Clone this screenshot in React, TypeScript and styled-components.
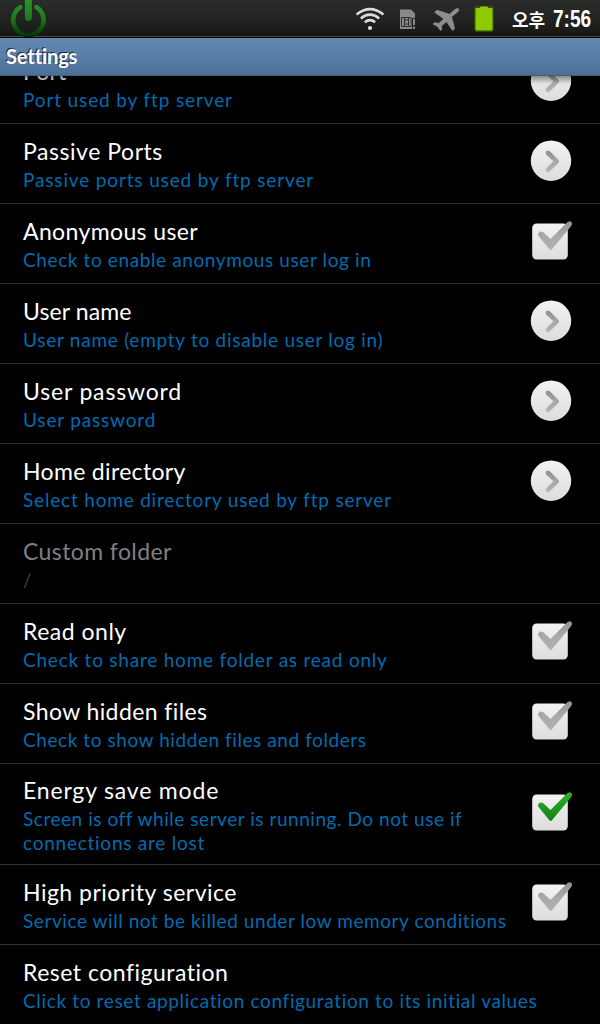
import React from 'react';
import styled, { createGlobalStyle } from 'styled-components';

const GlobalStyle = createGlobalStyle`
  * { box-sizing: border-box; }
  html, body { margin: 0; padding: 0; background: #000; }
`;

const Screen = styled.main`
  width: 600px;
  height: 1024px;
  display: flex;
  flex-direction: column;
  overflow: hidden;
  background: #000;
  color: #fff;
  font-family: Lato, "Open Sans", sans-serif;
  font-variant-ligatures: none;
`;

const StatusBar = styled.header`
  flex: none;
  height: 38px;
  display: flex;
  justify-content: space-between;
  background: linear-gradient(#2b2d2b 0, #1f211f 24px, #151715 36px);
  border-bottom: 1px solid #000;
  box-shadow: inset 0 -1px 0 #454545;
`;

const StatusIcons = styled.div`
  display: flex;
  align-items: flex-start;
`;

const Clock = styled.time`
  width: 88px;
  margin-left: 5px;
  display: flex;
  align-items: center;
  height: 38px;
  white-space: nowrap;
`;

const Meridiem = styled.span`
  font: 700 18px/38px "Noto Sans CJK KR", sans-serif;
`;

const Digits = styled.span`
  margin-left: 8px;
  font: 700 23px/38px "Liberation Sans", Arial, sans-serif;
  transform: scaleX(0.83);
  transform-origin: left center;
`;

const TitleBar = styled.h1`
  flex: none;
  height: 38px;
  margin: 0;
  padding-left: 6px;
  background: linear-gradient(#6387b1, #5a82ab 40%, #4c6f96);
  border-bottom: 1px solid #3c5f7c;
  font-size: 20px;
  line-height: 37px;
  font-weight: 700;
  letter-spacing: -0.1px;
  text-shadow: -1px -1px 0 #1b2838;
`;

const Viewport = styled.section`
  flex: 1;
  min-height: 0;
  overflow: hidden;
  position: relative;
  &::before {
    content: '';
    position: absolute;
    z-index: 1;
    inset: 0 0 auto;
    height: 8px;
    background: linear-gradient(rgba(0, 0, 0, 0.4), transparent);
  }
`;

const List = styled.ul`
  list-style: none;
  margin: -32px 0 0;
  padding: 0;
`;

const Row = styled.li<{ $tall?: boolean }>`
  height: ${(p) => (p.$tall ? 101 : 80)}px;
  padding: ${(p) => (p.$tall ? 12 : 13)}px 0 0 23px;
  display: flex;
  justify-content: space-between;
  border-bottom: 1px solid #323232;
`;

const Copy = styled.div`
  display: flex;
  flex-direction: column;
  white-space: nowrap;
`;

const Title = styled.div<{ $tracking: number; $disabled?: boolean }>`
  font-size: 23px;
  line-height: 28px;
  letter-spacing: ${(p) => p.$tracking}px;
  color: ${(p) => (p.$disabled ? '#808080' : '#fff')};
`;

const Summary = styled.div<{ $tracking: number; $disabled?: boolean }>`
  font-size: 19px;
  line-height: 24px;
  letter-spacing: ${(p) => p.$tracking}px;
  color: ${(p) => (p.$disabled ? '#404040' : '#006cae')};
  &:nth-child(2) { margin-top: 3px; }
`;

const Widget = styled.div<{ $tall?: boolean }>`
  width: 52px;
  height: 52px;
  margin: ${(p) => (p.$tall ? 10 : -2)}px 23px 0 0;
  flex: none;
`;

const HiddenSvg = styled.svg`
  display: block;
  flex: none;
  height: 0;
`;

const Gradients = () => (
  <HiddenSvg width="0" height="0" aria-hidden="true">
    <defs>
      <linearGradient id="face" x1="0" y1="0" x2="0" y2="1">
        <stop offset="0" stopColor="#f4f2f4" />
        <stop offset="1" stopColor="#dddddd" />
      </linearGradient>
      <linearGradient id="mark" x1="0" y1="0" x2="0" y2="1">
        <stop offset="0" stopColor="#929092" />
        <stop offset=".5" stopColor="#a9a7a9" />
        <stop offset="1" stopColor="#b4b2b4" />
      </linearGradient>
      <linearGradient id="green" x1="0" y1="0" x2="0" y2="1">
        <stop offset="0" stopColor="#2cb52c" />
        <stop offset="1" stopColor="#148014" />
      </linearGradient>
      <linearGradient id="power" gradientUnits="userSpaceOnUse" x1="0" y1="0" x2="0" y2="37">
        <stop offset="0" stopColor="#2a942d" />
        <stop offset=".5" stopColor="#1d7a20" />
        <stop offset="1" stopColor="#032d04" />
      </linearGradient>
    </defs>
  </HiddenSvg>
);

const Arrow = () => (
  <svg width="52" height="52" viewBox="0 0 52 52">
    <circle cx="26" cy="25.7" r="20.2" fill="url(#face)" />
    <path d="M23.1 18L31.7 26.4L23.1 34.8" fill="none" stroke="url(#mark)" strokeWidth="4.8" strokeLinecap="round" strokeLinejoin="round" />
  </svg>
);

const Check = ({ on }: { on?: boolean }) => (
  <svg width="52" height="52" viewBox="0 0 52 52">
    <rect x="7.2" y="8.5" width="35.6" height="36" rx="4.5" fill="url(#face)" />
    <path
      d="M13.4 18Q15.3 15.600 18 17.1L25.5 24L42.8 6.8Q45.6 5.2 47 7.8Q47.5 9.4 46.2 11L27 34.2Q25.8 35.6 24.4 34.2L13.5 21Q12.5 19.5 13.4 18Z"
      fill={on ? 'url(#green)' : 'url(#mark)'}
    />
  </svg>
);

type Item = {
  title: string;
  t: number;
  lines: [string, number][];
  widget?: 'arrow' | 'check' | 'checked';
  disabled?: boolean;
};

const items: Item[] = [
  { title: 'Port', t: 0.1, lines: [['Port used by ftp server', 0.87]], widget: 'arrow' },
  { title: 'Passive Ports', t: 0.55, lines: [['Passive ports used by ftp server', 0.85]], widget: 'arrow' },
  { title: 'Anonymous user', t: 0.38, lines: [['Check to enable anonymous user log in', 0.61]], widget: 'check' },
  { title: 'User name', t: 0.1, lines: [['User name (empty to disable user log in)', 0.74]], widget: 'arrow' },
  { title: 'User password', t: 0.83, lines: [['User password', 0.82]], widget: 'arrow' },
  { title: 'Home directory', t: 0.33, lines: [['Select home directory used by ftp server', 0.81]], widget: 'arrow' },
  { title: 'Custom folder', t: 0.4, lines: [['/', 0]], disabled: true },
  { title: 'Read only', t: 0.5, lines: [['Check to share home folder as read only', 0.78]], widget: 'check' },
  { title: 'Show hidden files', t: 0.4, lines: [['Check to show hidden files and folders', 0.57]], widget: 'check' },
  {
    title: 'Energy save mode',
    t: 0.83,
    lines: [['Screen is off while server is running. Do not use if', 0.54], ['connections are lost', 0.75]],
    widget: 'checked',
  },
  { title: 'High priority service', t: 0.5, lines: [['Service will not be killed under low memory conditions', 0.57]], widget: 'check' },
  { title: 'Reset configuration', t: 0.5, lines: [['Click to reset application configuration to its initial values', 0.65]] },
];

export default function App() {
  return (
    <Screen>
      <GlobalStyle />
      <Gradients />
      <StatusBar>
        <svg width="60" height="37" viewBox="0 0 60 37" fill="none" stroke="url(#power)" strokeLinecap="round">
          <path d="M20.3 7.2A15.2 15.2 0 1 0 36.5 7.2" strokeWidth="4.6" />
          <path d="M28.3 -3L28.4 17.5" strokeWidth="7" />
        </svg>
        <StatusIcons>
          <svg width="152" height="37" viewBox="0 0 152 37">
            <g transform="translate(-355 0)">
              <g fill="none" stroke="#dcdcdc" strokeWidth="2.6">
                <path d="M356.6 14.6Q370 3.8 383.4 14.6" />
                <path d="M360.8 18.4Q370 11 379.2 18.4" />
                <path d="M364.8 22.2Q370 18 375.2 22.2" />
              </g>
              <circle cx="370" cy="28" r="2.1" fill="#e0e0e0" />
              <path d="M400 9.5H411L415 13.5V18H412V29H400Z" fill="#8a8a8a" />
              <path d="M413 19h2v6h-2zM413 26.5h2v2.5h-2z" fill="#8a8a8a" />
              <path d="M401.5 17.5h9.5v9h-9.5zM404.5 17v3M408.5 17v3M404.5 24v3M408.5 24v3M404.5 20h4v4h-4z" fill="none" stroke="#2e2e2e" />
              <path d="M458.6 8.8Q457 8 454.5 10L449.5 14.3L437 10.3L434.7 12.3L444 18.8L439 23.3L434.5 22.8L433 24L437.5 26.5L440.5 30.5L441.8 29.5L441.5 25.8L446.5 21.5L452.5 30.5L454.6 28.6L451.5 16.8L457.5 12Q459.6 9.8 458.6 8.8Z" fill="#8e8e8e" stroke="#8e8e8e" strokeWidth=".8" strokeLinejoin="round" />
              <rect x="474" y="6" width="20" height="26" rx="3" fill="#4c6c08" opacity=".5" />
              <path d="M476 8.500h4.500v-1.500h7v1.500h4.500v21.500h-16z" fill="#8fca00" stroke="#8fca00" strokeLinejoin="round" />
            </g>
          </svg>
          <Clock>
            <Meridiem>오후</Meridiem>
            <Digits>7:56</Digits>
          </Clock>
        </StatusIcons>
      </StatusBar>
      <TitleBar>Settings</TitleBar>
      <Viewport>
        <List>
          {items.map((it) => {
            const tall = it.lines.length > 1;
            return (
              <Row key={it.title} $tall={tall}>
                <Copy>
                  <Title $tracking={it.t} $disabled={it.disabled}>{it.title}</Title>
                  {it.lines.map(([text, tracking]) => (
                    <Summary key={text} $tracking={tracking} $disabled={it.disabled}>{text}</Summary>
                  ))}
                </Copy>
                {it.widget && (
                  <Widget $tall={tall}>{it.widget === 'arrow' ? <Arrow /> : <Check on={it.widget === 'checked'} />}</Widget>
                )}
              </Row>
            );
          })}
        </List>
      </Viewport>
    </Screen>
  );
}
